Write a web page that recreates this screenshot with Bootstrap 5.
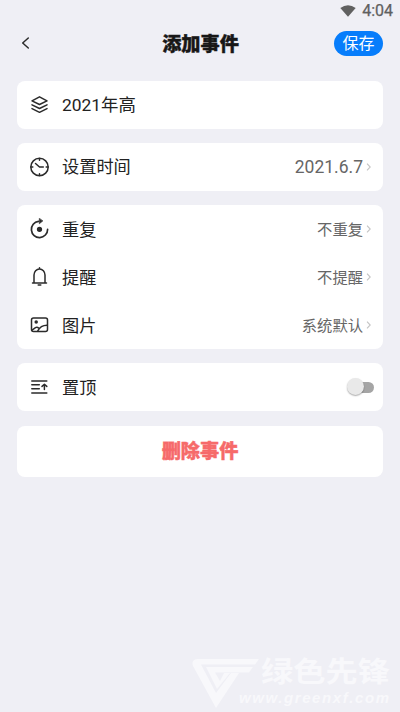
<!DOCTYPE html>
<html lang="zh-CN">
<head>
<meta charset="utf-8">
<meta name="viewport" content="width=device-width, initial-scale=1">
<title>添加事件</title>
<link href="https://cdn.jsdelivr.net/npm/bootstrap@5.3.0/dist/css/bootstrap.min.css" rel="stylesheet">
<style>
body{background:#efeff5;color:#222;font-family:Roboto,"Noto Sans CJK SC",sans-serif;font-size:17.2px;line-height:24px;height:712px;overflow:hidden}
svg{display:block;flex:none}
.status{height:22px;padding-right:7px;font-size:16px;color:#606060;gap:6px}
.status span{-webkit-text-stroke:.25px #606060}
.topbar{height:42px;padding:0 17px 0 20px}
.side{width:47px}
.heading{font-size:19.2px;line-height:24px;font-weight:900;color:#171717;padding-top:3px;-webkit-text-stroke:.4px #171717}
.save{width:49px;height:25px;background:#077dfb;color:#fff;font-size:16px;line-height:25px;padding:0}
.panels{padding:17px 17px 0;gap:14.15px}
.panel{background:#fff;border-radius:8px}
.line{height:48px;padding:0 10px 0 12px}
.line>svg:first-child{margin-right:10px}
.lowered>span{padding-top:2px}
.ico{fill:none;stroke:#2b2b2b;stroke-width:1.5;stroke-linecap:round;stroke-linejoin:round}
.val{color:#666;font-size:15.3px}
.name-text{font-size:17.4px}
.date{font-size:17.5px}
.chev{fill:none;stroke:#c4c4c4;stroke-width:1.1;margin-left:2px}
.toggle{width:28px;height:18px;margin-right:-2px}
.track{left:6px;top:3.5px;width:21px;height:11px;background:#a5a5a5}
.knob{left:0;top:0;width:17px;height:17px;background:#e9e9e9;box-shadow:0 1px 1.5px #0005}
.delete{height:51px;color:#f66a6a;font-size:19.2px;font-weight:900;border:0;padding-top:3px;-webkit-text-stroke:.4px #f66a6a}
.wm{left:180px;top:640px;pointer-events:none}
</style>
<script src="https://cdn.jsdelivr.net/npm/bootstrap@5.3.0/dist/js/bootstrap.bundle.min.js"></script>
</head>
<body>
<div class="status d-flex justify-content-end align-items-center">
  <svg width="16" height="12" viewBox="0 0 16 12"><path d="M.3 3Q8-2.300 15.700 3L8 11.700Z" fill="#606060"/></svg><span>4:04</span>
</div>
<header class="topbar d-flex align-items-center justify-content-between">
  <div class="side"><svg class="ico" width="12" height="14" viewBox="0 0 12 14"><path d="M8.300 2 2.700 7l5.600 5"/></svg></div>
  <h1 class="heading mb-0">添加事件</h1>
  <button class="save btn rounded-pill border-0">保存</button>
</header>
<main class="panels d-flex flex-column">
  <section class="panel"><div class="line d-flex align-items-center">
    <svg class="ico" width="23" height="22" viewBox="0 0 23 22"><path d="M10.500 2.800 18 6.800l-7.500 3.700L3 6.800Z M3 10.800l7.500 3.700 7.500-3.700 M3 14.600l7.500 3.700 7.500-3.700"/></svg><span class="name-text">2021年高</span>
  </div></section>
  <section class="panel"><div class="line d-flex align-items-center">
    <svg class="ico" width="23" height="22" viewBox="0 0 23 22"><circle cx="10.500" cy="11" r="8.700"/><path d="M6.500 7.500 10.500 11h3.800M10.500 2.500v1.800M10.500 17.700v1.800M2 11h1.800M17.200 11H19"/></svg><span>设置时间</span>
    <span class="val date ms-auto">2021.6.7</span><svg class="chev" width="8" height="10" viewBox="0 0 8 10"><path d="M2 1.700 5.200 5 2 8.300"/></svg>
  </div></section>
  <section class="panel">
    <div class="line lowered d-flex align-items-center">
      <svg class="ico" width="23" height="22" viewBox="0 0 23 22"><path d="M9.500 3.400A8.100 8.100 0 1 0 18.600 11.400" stroke-width="1.700"/><circle cx="10.500" cy="11.300" r="1.900" fill="#2b2b2b"/><path d="M10.300.600v5.200l3.400-2.700Z" fill="#2b2b2b" stroke-width=".6"/></svg><span>重复</span>
      <span class="val ms-auto">不重复</span><svg class="chev" width="8" height="10" viewBox="0 0 8 10"><path d="M2 1.700 5.200 5 2 8.300"/></svg>
    </div>
    <div class="line lowered d-flex align-items-center">
      <svg class="ico" width="23" height="22" viewBox="0 0 23 22"><path d="M10.500 1.800v1.200M5 16.800V9a5.500 6 0 0 1 11 0v7.800M3.500 17h14M9.200 19h2.600"/></svg><span>提醒</span>
      <span class="val ms-auto">不提醒</span><svg class="chev" width="8" height="10" viewBox="0 0 8 10"><path d="M2 1.700 5.200 5 2 8.300"/></svg>
    </div>
    <div class="line lowered d-flex align-items-center">
      <svg class="ico" width="23" height="22" viewBox="0 0 23 22"><rect x="2.500" y="4" width="16" height="13.500" rx="2"/><circle cx="7.200" cy="8.100" r="1" fill="#2b2b2b"/><path d="M3 16.200 6.500 13.700Q8 12.700 10 14.300M8.800 16.900Q11.500 11.200 18 11.200"/></svg><span>图片</span>
      <span class="val ms-auto">系统默认</span><svg class="chev" width="8" height="10" viewBox="0 0 8 10"><path d="M2 1.700 5.200 5 2 8.300"/></svg>
    </div>
  </section>
  <section class="panel"><div class="line lowered d-flex align-items-center">
    <svg class="ico" width="23" height="22" viewBox="0 0 23 22"><path d="M2.800 4.900h15M2.800 8.800h7.500M2.800 12.800h7.500M2.800 17h15M15.400 13.500V8.500M13 10.400l2.400-2.200 2.400 2.200"/></svg><span>置顶</span>
    <div class="toggle position-relative ms-auto" role="switch" aria-checked="false"><div class="track position-absolute rounded-pill"></div><div class="knob position-absolute rounded-circle"></div></div>
  </div></section>
  <button class="panel delete">删除事件</button>
</main>
<svg class="wm position-absolute" width="220" height="72" viewBox="0 0 220 72" fill="#f8f8fb">
  <path d="M17 19H79L75 24.500H21L36 53 51 33H59L36 68 13 26Q11 20 17 19Z"/><path d="M26 27H73L69 32.500H35L40 41 44 33H50L37 49Z"/>
  <text x="81" y="42" font-size="28" font-weight="700" textLength="129" lengthAdjust="spacingAndGlyphs" font-family="Noto Sans CJK SC, sans-serif">绿色先锋</text>
  <text x="59" y="63" font-size="15" font-style="italic" font-weight="700" textLength="150" font-family="Liberation Sans, sans-serif">www.greenxf.com</text>
</svg>
</body>
</html>
